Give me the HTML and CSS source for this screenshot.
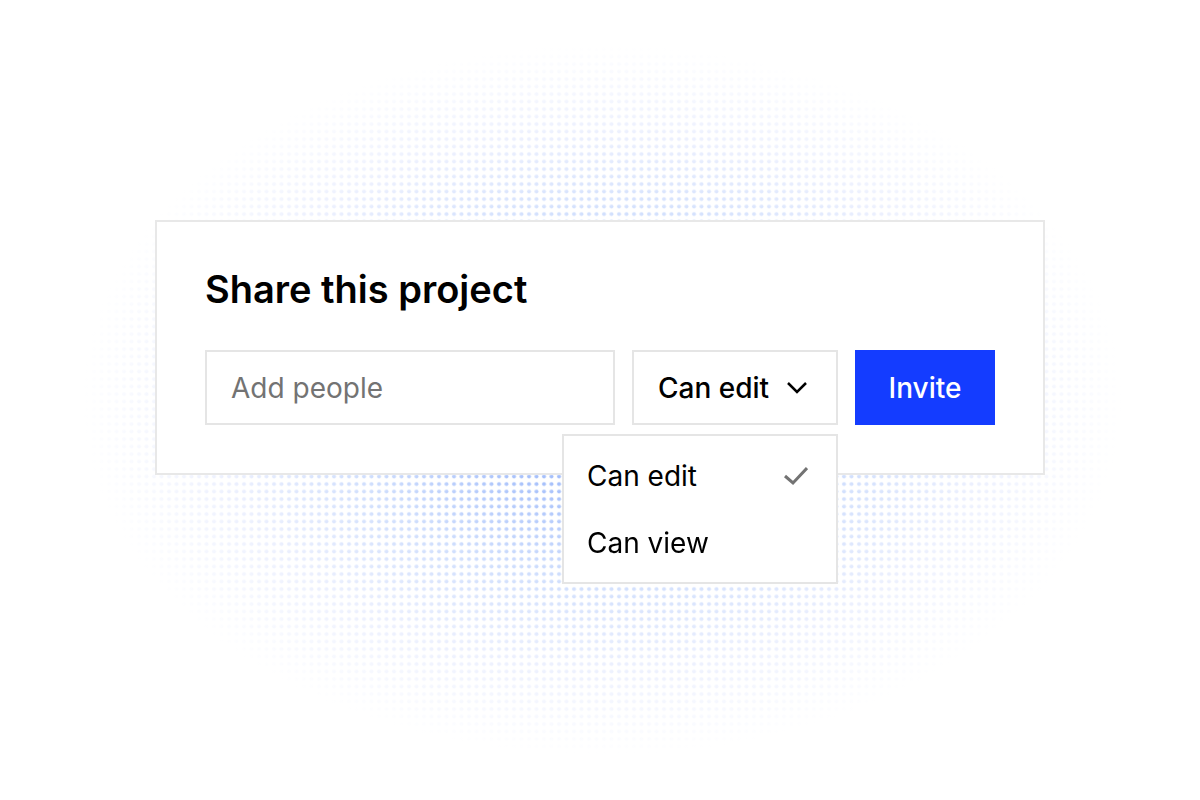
FILE: index.html
```html
<!DOCTYPE html>
<html lang="en">
<head>
  <meta charset="UTF-8">
  <meta name="viewport" content="width=device-width, initial-scale=1.0">
  <title>Share this project</title>
  <link rel="stylesheet" href="styles.css">
</head>
<body>

  <!-- Dotted glow -->
  <svg class="backdrop" viewBox="0 0 2400 1600" preserveAspectRatio="xMidYMid slice" aria-hidden="true">
    <defs>
      <pattern id="dots" width="15" height="15" patternUnits="userSpaceOnUse">
        <circle cx="8" cy="8" r="4" fill="#fff" />
      </pattern>
      <mask id="dot-mask" maskUnits="userSpaceOnUse" x="0" y="0" width="2400" height="1600">
        <rect width="2400" height="1600" fill="url(#dots)" />
      </mask>
      <radialGradient id="glow">
        <stop offset="0" stop-color="#8fb0fb" />
        <stop offset="0.25" stop-color="#a6c0fb" />
        <stop offset="0.5" stop-color="#cfdefd" />
        <stop offset="0.75" stop-color="#ecf0fe" />
        <stop offset="1" stop-color="#ffffff" />
      </radialGradient>
    </defs>
    <ellipse cx="1204" cy="800" rx="1040" ry="710" fill="url(#glow)" mask="url(#dot-mask)" />
  </svg>

  <!-- Share Card -->
  <main class="share-card">
    <h1>Share this project</h1>

    <form class="share-form">
      <input type="text" class="people-input" placeholder="Add people" aria-label="Add people">

      <div class="role">
        <select class="role-select" aria-label="Permission">
          <option>Can edit</option>
          <option>Can view</option>
        </select>
        <svg class="chevron" viewBox="0 0 24 24" aria-hidden="true">
          <path d="M3 8l9 9 9-9" />
        </svg>

        <!-- Role Menu -->
        <div class="role-menu">
          <button type="button" class="role-option">
            Can edit
            <svg class="check" viewBox="0 0 24 24" aria-hidden="true">
              <path d="M1 12l8 7L23 4" />
            </svg>
          </button>
          <button type="button" class="role-option">Can view</button>
        </div>
      </div>

      <button type="submit" class="invite-button">Invite</button>
    </form>
  </main>

</body>
</html>
```

FILE: styles.css
```css
/* General styling */
* {
  box-sizing: border-box;
}

body {
  display: flex;
  align-items: flex-start;
  justify-content: center;
  min-height: 100vh;
  margin: 0;
  padding: 220px 24px 24px;
  background-color: #fff;
  color: #000;
  font-family: Inter, "Liberation Sans", sans-serif;
}

input,
select,
button {
  margin: 0;
  border-radius: 0;
  font-family: inherit;
  font-size: 28px;
}

/* Dotted glow */
.backdrop {
  position: fixed;
  inset: 0;
  z-index: -1;
  width: 100%;
  height: 100%;
}

/* Share Card */
.share-card {
  width: 100%;
  max-width: 890px;
  padding: 48px;
  background: #fff;
  border: 2px solid #e8e8e8;
}

h1 {
  margin: 0 0 42px;
  font-size: 38px;
  font-weight: 600;
  line-height: 38px;
}

/* Form row */
.share-form {
  display: flex;
  gap: 17px;
}

.people-input {
  flex: 1;
  min-width: 0;
  height: 75px;
  padding: 0 24px;
  border: 2px solid #e5e5e5;
  background: #fff;
}

.people-input::placeholder {
  color: #737373;
  opacity: 1;
}

.role {
  position: relative;
}

.role-select {
  width: 206px;
  height: 75px;
  padding: 0 24px;
  border: 2px solid #e5e5e5;
  background: #fff;
  color: #000;
  font-weight: 500;
  appearance: none;
}

.chevron,
.check {
  width: 24px;
  height: 24px;
  fill: none;
}

.chevron {
  position: absolute;
  top: 25px;
  right: 29px;
  stroke: #000;
  stroke-width: 2.5;
  pointer-events: none;
}

.check {
  stroke: #737373;
  stroke-width: 3;
}

.invite-button {
  width: 140px;
  height: 75px;
  padding: 0;
  border: 0;
  background: #143cff;
  color: #fff;
  font-weight: 500;
}

/* Role Menu */
.role-menu {
  position: absolute;
  top: calc(100% + 9px);
  right: 0;
  width: 276px;
  padding: 6px 0;
  background: #fff;
  border: 2px solid #e5e5e5;
}

.role-option {
  display: flex;
  align-items: center;
  justify-content: space-between;
  width: 100%;
  height: 67px;
  padding: 0 28px 0 23px;
  border: 0;
  background: none;
  color: #000;
}
```
